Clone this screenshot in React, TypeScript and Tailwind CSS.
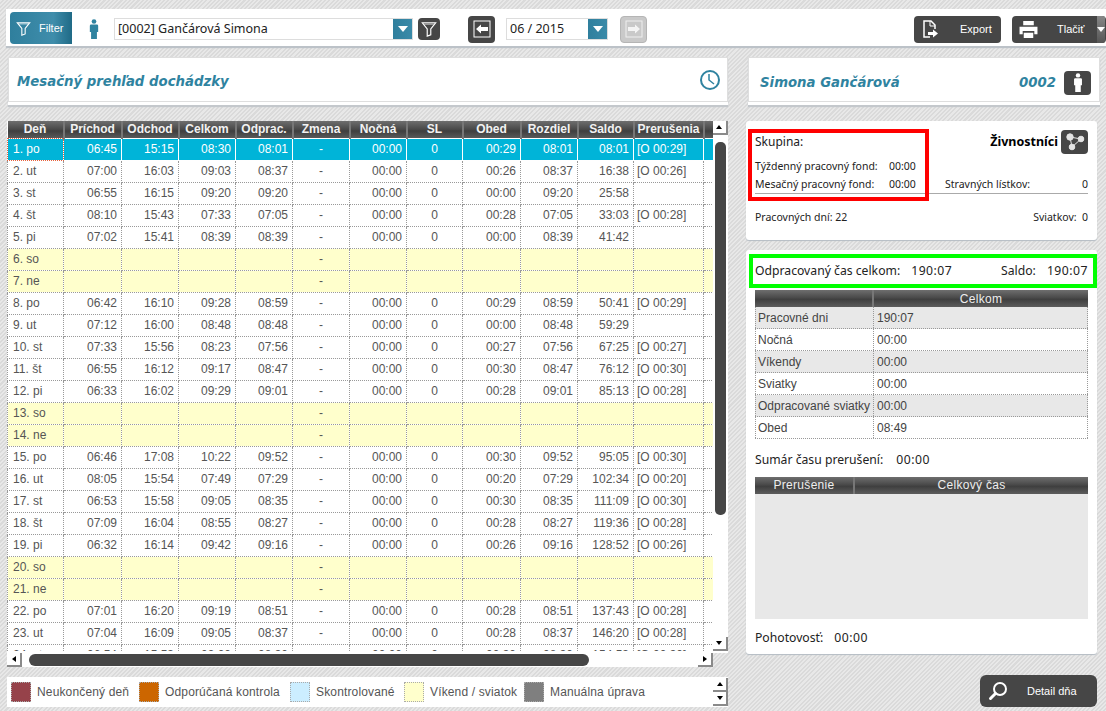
import { ReactElement, ReactNode } from "react";

const stripes =
  "bg-[repeating-linear-gradient(135deg,#e8e8e8_0px,#e8e8e8_1.5px,#dadada_1.5px,#dadada_3px)]";
const headerBg = "bg-[linear-gradient(#6e6e6e,#4a4a4a_45%,#3f3f3f_55%,#5c5c5c)]";
const tahoma = "font-['Noto_Sans','DejaVu_Sans',sans-serif]";
const arial = "font-['Liberation_Sans',Arial,sans-serif]";
const titleText = "font-['DejaVu_Sans',sans-serif] text-[13.3px] font-bold italic text-[#2f83a0]";

type Row = string[];

const work = (
  day: string,
  inT: string,
  out: string,
  total: string,
  worked: string,
  lunch: string,
  saldo: string,
  brk?: string,
): Row => [day, inT, out, total, worked, "-", "00:00", "0", lunch, worked, saldo, brk ?? "", ""];

const off = (day: string): Row => [day, "", "", "", "", "-", "", "", "", "", "", "", ""];

const rows: Row[] = [
  work("1. po", "06:45", "15:15", "08:30", "08:01", "00:29", "08:01", "[O 00:29]"),
  work("2. ut", "07:00", "16:03", "09:03", "08:37", "00:26", "16:38", "[O 00:26]"),
  work("3. st", "06:55", "16:15", "09:20", "09:20", "00:00", "25:58"),
  work("4. št", "08:10", "15:43", "07:33", "07:05", "00:28", "33:03", "[O 00:28]"),
  work("5. pi", "07:02", "15:41", "08:39", "08:39", "00:00", "41:42"),
  off("6. so"),
  off("7. ne"),
  work("8. po", "06:42", "16:10", "09:28", "08:59", "00:29", "50:41", "[O 00:29]"),
  work("9. ut", "07:12", "16:00", "08:48", "08:48", "00:00", "59:29"),
  work("10. st", "07:33", "15:56", "08:23", "07:56", "00:27", "67:25", "[O 00:27]"),
  work("11. št", "06:55", "16:12", "09:17", "08:47", "00:30", "76:12", "[O 00:30]"),
  work("12. pi", "06:33", "16:02", "09:29", "09:01", "00:28", "85:13", "[O 00:28]"),
  off("13. so"),
  off("14. ne"),
  work("15. po", "06:46", "17:08", "10:22", "09:52", "00:30", "95:05", "[O 00:30]"),
  work("16. ut", "08:05", "15:54", "07:49", "07:29", "00:20", "102:34", "[O 00:20]"),
  work("17. st", "06:53", "15:58", "09:05", "08:35", "00:30", "111:09", "[O 00:30]"),
  work("18. št", "07:09", "16:04", "08:55", "08:27", "00:28", "119:36", "[O 00:28]"),
  work("19. pi", "06:32", "16:14", "09:42", "09:16", "00:26", "128:52", "[O 00:26]"),
  off("20. so"),
  off("21. ne"),
  work("22. po", "07:01", "16:20", "09:19", "08:51", "00:28", "137:43", "[O 00:28]"),
  work("23. ut", "07:04", "16:09", "09:05", "08:37", "00:28", "146:20", "[O 00:28]"),
  work("24. st", "06:54", "15:53", "09:00", "08:30", "00:30", "154:53", "[O 00:30]"),
];

const columns = ["Deň", "Príchod", "Odchod", "Celkom", "Odprac.", "Zmena", "Nočná", "SL", "Obed", "Rozdiel", "Saldo", "Prerušenia", ""];
const widths = [56, 58, 57, 57, 57, 57, 57, 56, 58, 57, 56, 70, 10];
const align = ["text-left pl-[5px]", "text-right pr-[4px]", "text-right pr-[4px]", "text-right pr-[4px]", "text-right pr-[4px]", "text-center", "text-right pr-[4px]", "text-center", "text-right pr-[4px]", "text-right pr-[4px]", "text-right pr-[4px]", "text-left pl-[3px]", ""];

const DarkSquare = ({ className, children }: { className: string; children: ReactNode }): ReactElement => (
  <div className={`flex items-center justify-center rounded-[4px] bg-[#464646] ${className}`}>{children}</div>
);

const FunnelIcon = ({ size = 18 }: { size?: number }): ReactElement => (
  <svg width={size} height={size} viewBox="0 0 18 18" fill="none" stroke="white" strokeWidth="1.3">
    <path d="M1.5 2h15l-5.500 7v6.500l-4 1.500v-8z" />
    <path d="M3.500 3.500h11" strokeWidth="0.8" />
  </svg>
);

const PersonIcon = ({ fill, className }: { fill: string; className: string }): ReactElement => (
  <svg className={className} viewBox="0 0 12 24" fill={fill}>
    <circle cx="6" cy="3" r="2.800" />
    <path d="M2.500 6.500h7a1.500 1.500 0 0 1 1.500 1.500v7.500h-1.500v8.500h-7v-8.500h-1.500v-7.500a1.500 1.500 0 0 1 1.500-1.500z" />
  </svg>
);

const DropArrow = (): ReactElement => (
  <div className="flex h-[20px] w-[19px] items-center justify-center bg-[linear-gradient(90deg,#2f7f9d,#3a8aa8)]">
    <div className="h-0 w-0 border-x-[5px] border-t-[6px] border-x-transparent border-t-white" />
  </div>
);

const ArrowBtn = ({ dir, muted }: { dir: "left" | "right"; muted?: boolean }): ReactElement => (
  <div className={`flex h-[27px] w-[27px] items-center justify-center rounded-[4px] ${muted ? "border border-[#b5b5b5] bg-[#c9c9c9]" : "bg-[#464646]"}`}>
    <svg width="18" height="18" viewBox="0 0 18 18">
      <rect x="1" y="1" width="16" height="16" fill="none" stroke="white" strokeWidth="1" opacity={muted ? 0.7 : 1} />
      <path
        d={dir === "left" ? "M3 9l5-4.500v2.500h7v4h-7v2.500z" : "M15 9l-5-4.500v2.500h-7v4h7v2.500z"}
        fill="white"
        opacity={muted ? 0.8 : 1}
      />
    </svg>
  </div>
);

const ScrollBtn = ({ dir, className = "" }: { dir: "up" | "down" | "left" | "right"; className?: string }): ReactElement => {
  const tri = {
    up: "border-x-[3px] border-b-[4px] border-x-transparent border-b-black",
    down: "border-x-[3px] border-t-[4px] border-x-transparent border-t-black",
    left: "border-y-[3px] border-r-[4px] border-y-transparent border-r-black",
    right: "border-y-[3px] border-l-[4px] border-y-transparent border-l-black",
  }[dir];
  return (
    <div className={`flex h-[14px] w-[15px] shrink-0 items-center justify-center border-r-2 border-b-2 border-r-[#8a8a8a] border-b-[#8a8a8a] bg-white ${className}`}>
      <div className={`h-0 w-0 ${tri}`} />
    </div>
  );
};

const Panel = ({ children, className }: { children: ReactNode; className: string }): ReactElement => (
  <div className={`rounded-[3px] bg-white shadow-[0_1px_1px_#b4bcc4] ${className}`}>{children}</div>
);

const TitleBar = ({ children, className }: { children: ReactNode; className: string }): ReactElement => (
  <div className="h-[48px] bg-white shadow-[0_2px_1px_#c4c8cc]">
    <div className={`flex h-[45px] items-center border border-[#dedede] ${className}`}>{children}</div>
  </div>
);

const SummaryRow = ({ label, value, shaded }: { label: string; value: string; shaded?: boolean }): ReactElement => (
  <div className={`flex h-[22px] items-center border-b border-dotted border-[#999] text-[12px] whitespace-nowrap text-[#444] ${arial} ${shaded ? "bg-[#e8e8e8]" : "bg-white"}`}>
    <div className="flex h-full w-[119px] shrink-0 items-center border-x border-dotted border-[#999] pl-[2px]">{label}</div>
    <div className="flex h-full flex-1 items-center border-r border-dotted border-[#999] pl-[3px]">{value}</div>
  </div>
);

const LegendItem = ({ color, label, className }: { color: string; label: string; className: string }): ReactElement => (
  <div className={`flex shrink-0 items-center ${className}`}>
    <div className={`h-[20px] w-[20px] shrink-0 border border-dotted border-[#aaa] ${color}`} />
    <span className="ml-[6px] text-[12px] tracking-[0.15px] whitespace-nowrap text-[#555]">{label}</span>
  </div>
);

const App = (): ReactElement => {
  return (
    <div className={`relative flex h-[711px] w-[1106px] flex-col overflow-hidden ${stripes} ${arial}`}>
      {/* top toolbar */}
      <div className={`mt-[9px] ml-[6px] flex h-[37px] shrink-0 items-center overflow-hidden bg-white pt-[3px] shadow-[0_2px_1px_#bcc2c8] ${tahoma}`}>
        <div className="-mt-[2px] ml-[4px] flex h-[32px] w-[62px] shrink-0 items-center rounded-l-[4px] bg-[linear-gradient(90deg,#2f7f9d,#3f8dab_70%,#1f6a86)] pl-[6px] text-[11px] text-white">
          <FunnelIcon size={15} />
          <span className={`ml-[8px] ${arial}`}>Filter</span>
        </div>
        <PersonIcon fill="#2f83a0" className="ml-[17px] h-[20px] w-[10px] shrink-0" />
        <div className="ml-[15px] flex h-[22px] w-[299px] shrink-0 items-center justify-between border border-[#ddd] bg-white pl-[3px] text-[12.5px] text-[#222]">
          <span>[0002] Gančárová Simona</span>
          <DropArrow />
        </div>
        <DarkSquare className="ml-[5px] h-[22px] w-[22px] shrink-0">
          <FunnelIcon size={16} />
        </DarkSquare>
        <div className="ml-[28px] shrink-0">
          <ArrowBtn dir="left" />
        </div>
        <div className="ml-[11px] flex h-[22px] w-[102px] shrink-0 items-center justify-between border border-[#ddd] bg-white pl-[3px] text-[12.5px] text-[#222]">
          <span>06 / 2015</span>
          <DropArrow />
        </div>
        <div className="ml-[12px] shrink-0">
          <ArrowBtn dir="right" muted />
        </div>
        <DarkSquare className="ml-[267px] h-[27px] w-[87px] shrink-0 justify-start pl-[7px] text-[11px] text-white">
          <svg width="18" height="20" viewBox="0 0 18 20" fill="none" stroke="white" strokeWidth="1.500">
            <path d="M9 18h-6v-16h7l4 4v4" />
            <path d="M9 2v5h5" strokeWidth="1" />
            <path d="M7 13h5v-2.500l5 4-5 4v-2.500h-5z" fill="white" stroke="none" />
          </svg>
          <span className={`ml-[21px] ${arial}`}>Export</span>
        </DarkSquare>
        <DarkSquare className="ml-[11px] h-[27px] w-[94px] shrink-0 justify-start overflow-hidden pl-[6px] text-[11px] text-white">
          <svg width="21" height="19" viewBox="0 0 19 18" fill="white">
            <path d="M4.500 1h10v4h-10z" />
            <path d="M1 6.500h17v7h-3v-3h-11v3h-3z" />
            <path d="M5 12h9v5h-9z" />
          </svg>
          <span className={`ml-[18px] ${arial}`}>Tlačiť</span>
          <div className="ml-[13px] flex h-full w-[8px] shrink-0 items-center justify-center bg-[linear-gradient(#888,#555)]">
            <div className="h-0 w-0 border-x-[4px] border-t-[5px] border-x-transparent border-t-white" />
          </div>
        </DarkSquare>
      </div>

      {/* content columns */}
      <div className="mt-[11px] flex flex-1">
        <div className="ml-[8px] flex w-[720px] flex-col">
          <TitleBar className="justify-between pr-[6px] pl-[8px]">
            <span className={`mt-[4px] ${titleText}`}>Mesačný prehľad dochádzky</span>
            <svg width="22" height="22" viewBox="0 0 22 22" fill="none" stroke="#2f83a0" strokeWidth="2">
              <circle cx="11" cy="11" r="9" />
              <path d="M10 5v6l5 4" strokeWidth="1.500" />
            </svg>
          </TitleBar>

          <div className="mt-[16px] -ml-[1px] flex h-[546px] flex-col">
            <div className="flex h-[532px] shrink-0 bg-white">
              <div className="h-[530px] w-[706px] overflow-hidden">
                <table className="w-[706px] table-fixed border-collapse text-[12px]">
                  <colgroup>
                    {widths.map((w, i) => (
                      <col key={`col-${i}`} style={{ width: w }} />
                    ))}
                  </colgroup>
                  <thead>
                    <tr className={`h-[17px] ${headerBg}`}>
                      {columns.map((c, i) => (
                        <th key={`head-${i}`} className="overflow-hidden border-l-2 border-[#777] p-0 text-center text-[12px] leading-[17px] font-bold whitespace-nowrap text-[#f2f2f2] first:border-l-0">
                          {c}
                        </th>
                      ))}
                    </tr>
                  </thead>
                  <tbody>
                    {rows.map((row, r) => {
                      const selected = r === 0;
                      const weekend = row[5] === "-" && row[1] === "";
                      return (
                        <tr key={row[0]} className={`h-[22px] ${selected ? "bg-[#00b4d8] text-white" : weekend ? "bg-[#ffffcc] text-[#555]" : "bg-white text-[#555]"}`}>
                          {row.map((cell, c) => (
                            <td
                              key={`${row[0]}-${c}`}
                              className={`overflow-hidden border border-dotted p-0 leading-[21px] whitespace-nowrap ${selected ? (c === 0 ? "border-[#e8603c]" : "border-white") : "border-[#999]"} ${align[c]}`}
                            >
                              {cell}
                            </td>
                          ))}
                        </tr>
                      );
                    })}
                  </tbody>
                </table>
              </div>
              {/* vertical scrollbar */}
              <div className="flex w-[14px] flex-col items-center justify-between pb-[2px]">
                <ScrollBtn dir="up" />
                <div className="mt-[7px] mb-auto h-[373px] w-[11px] rounded-[5px] bg-[#464646]" />
                <ScrollBtn dir="down" />
              </div>
            </div>
            {/* horizontal scrollbar, the corner under the vertical one stays empty */}
            <div className="flex h-[14px] w-[706px] items-center bg-white">
              <ScrollBtn dir="left" />
              <div className="ml-[7px] h-[12px] w-[560px] rounded-[6px] bg-[#464646]" />
              <div className="ml-auto">
                <ScrollBtn dir="right" />
              </div>
            </div>
          </div>

          {/* legend */}
          <div className="mt-[10px] -ml-[1px] flex h-[30px] items-center bg-white pl-[4px]">
            <LegendItem color="bg-[#96424a]" label="Neukončený deň" className="w-[128px]" />
            <LegendItem color="bg-[#cc6600]" label="Odporúčaná kontrola" className="w-[151px]" />
            <LegendItem color="bg-[#cceeff]" label="Skontrolované" className="w-[114px]" />
            <LegendItem color="bg-[#ffffcc]" label="Víkend / sviatok" className="w-[120px]" />
            <LegendItem color="bg-[#7f7f7f]" label="Manuálna úprava" className="w-[110px]" />
            <div className="ml-auto flex flex-col">
              <ScrollBtn dir="up" />
              <ScrollBtn dir="down" />
            </div>
          </div>
        </div>

        <div className="ml-[20px] flex w-[352px] flex-col">
          <TitleBar className="justify-between pt-[6px] pr-[8px] pl-[11px]">
            <span className={titleText}>Simona Gančárová</span>
            <div className="flex items-center">
              <span className={titleText}>0002</span>
              <DarkSquare className="ml-[8px] h-[24px] w-[27px]">
                <PersonIcon fill="white" className="h-[19px] w-[10px]" />
              </DarkSquare>
            </div>
          </TitleBar>

          <div className={`mt-[16px] w-[351px] -ml-[2px] ${tahoma}`}>
            <Panel className="relative h-[119px] px-[9px] pt-[8px] text-[10.5px] text-[#222]">
              <div className="flex h-[26px] items-center justify-between">
                <span className="text-[12px]">Skupina:</span>
                <div className="flex items-center">
                  <span className="text-[12.5px] font-bold text-black">Živnostníci</span>
                  <DarkSquare className="ml-[3px] h-[24px] w-[27px]">
                    <svg width="20" height="18" viewBox="0 0 20 18" fill="#e4e4e4" stroke="#e4e4e4" strokeWidth="1">
                      <path d="M5 4l11 2M5 4l2 10M16 6l-9 8" />
                      <circle cx="5" cy="4" r="3.200" />
                      <circle cx="16" cy="6" r="2.800" />
                      <circle cx="7" cy="14" r="2.800" />
                    </svg>
                  </DarkSquare>
                </div>
              </div>
              <div className="mt-[3px] flex h-[18px] items-center">
                <span className="w-[134px]">Týždenný pracovný fond:</span>
                <span>00:00</span>
              </div>
              <div className="flex h-[18px] items-center justify-between border-b border-[#aaa]">
                <div className="flex">
                  <span className="w-[134px]">Mesačný pracovný fond:</span>
                  <span>00:00</span>
                </div>
                <div className="flex w-[143px] justify-between">
                  <span>Stravných lístkov:</span>
                  <span>0</span>
                </div>
              </div>
              <div className="mt-[16px] flex justify-between">
                <span>Pracovných dní:&nbsp;22</span>
                <span>Sviatkov:&nbsp; 0</span>
              </div>
              {/* red highlight */}
              <div className="absolute top-[8px] left-[2px] h-[72px] w-[181px] border-4 border-[#ff0000]" />
            </Panel>

            <Panel className="mt-[10px] h-[404px] pt-[4px] pl-[3px] text-[12.2px] text-[#222]">
              <div className="flex h-[34px] items-center justify-between border-4 border-[#00ff00] pr-[5px] pl-[2px]">
                <div className="flex">
                  <span>Odpracovaný čas celkom:</span>
                  <span className="ml-[11px] tracking-[0.5px]">190:07</span>
                </div>
                <div className="flex">
                  <span>Saldo:</span>
                  <span className="ml-[11px] tracking-[0.5px]">190:07</span>
                </div>
              </div>
              <div className="mt-[2px] mr-[9px] ml-[6px]">
                <div className={`flex h-[17px] ${headerBg} ${arial} text-center text-[12px] leading-[18px] tracking-[0.3px] text-[#eee]`}>
                  <div className="w-[119px] border-r-2 border-[#777]" />
                  <div className="flex-1">Celkom</div>
                </div>
                <SummaryRow label="Pracovné dni" value="190:07" shaded />
                <SummaryRow label="Nočná" value="00:00" />
                <SummaryRow label="Víkendy" value="00:00" shaded />
                <SummaryRow label="Sviatky" value="00:00" />
                <SummaryRow label="Odpracované sviatky" value="00:00" shaded />
                <SummaryRow label="Obed" value="08:49" />
                <div className="mt-[13px] flex h-[16px] leading-[16px]">
                  <span>Sumár času prerušení:</span>
                  <span className="ml-[13px] tracking-[0.5px]">00:00</span>
                </div>
                <div className={`mt-[9px] flex h-[17px] ${headerBg} ${arial} text-center text-[12px] leading-[17px] tracking-[0.3px] text-[#eee]`}>
                  <div className="w-[100px] border-r-2 border-[#777]">Prerušenie</div>
                  <div className="flex-1">Celkový čas</div>
                </div>
                <div className="h-[125px] bg-[#e8e8e8]" />
                <div className="mt-[11px] flex leading-[16px]">
                  <span>Pohotovosť:</span>
                  <span className="ml-[11px] tracking-[0.5px]">00:00</span>
                </div>
              </div>
            </Panel>

            <div className="mt-[21px] flex justify-end">
              <DarkSquare className="h-[32px] w-[117px] justify-start rounded-[6px] pl-[8px] text-[11px] text-white">
                <svg width="20" height="20" viewBox="0 0 20 20" fill="none" stroke="white">
                  <circle cx="12" cy="8" r="6" strokeWidth="2" />
                  <path d="M7.500 12.500l-5 5" strokeWidth="3" strokeLinecap="round" />
                </svg>
                <span className={`ml-[19px] ${arial}`}>Detail dňa</span>
              </DarkSquare>
            </div>
          </div>
        </div>
      </div>
    </div>
  );
};

export default App;
